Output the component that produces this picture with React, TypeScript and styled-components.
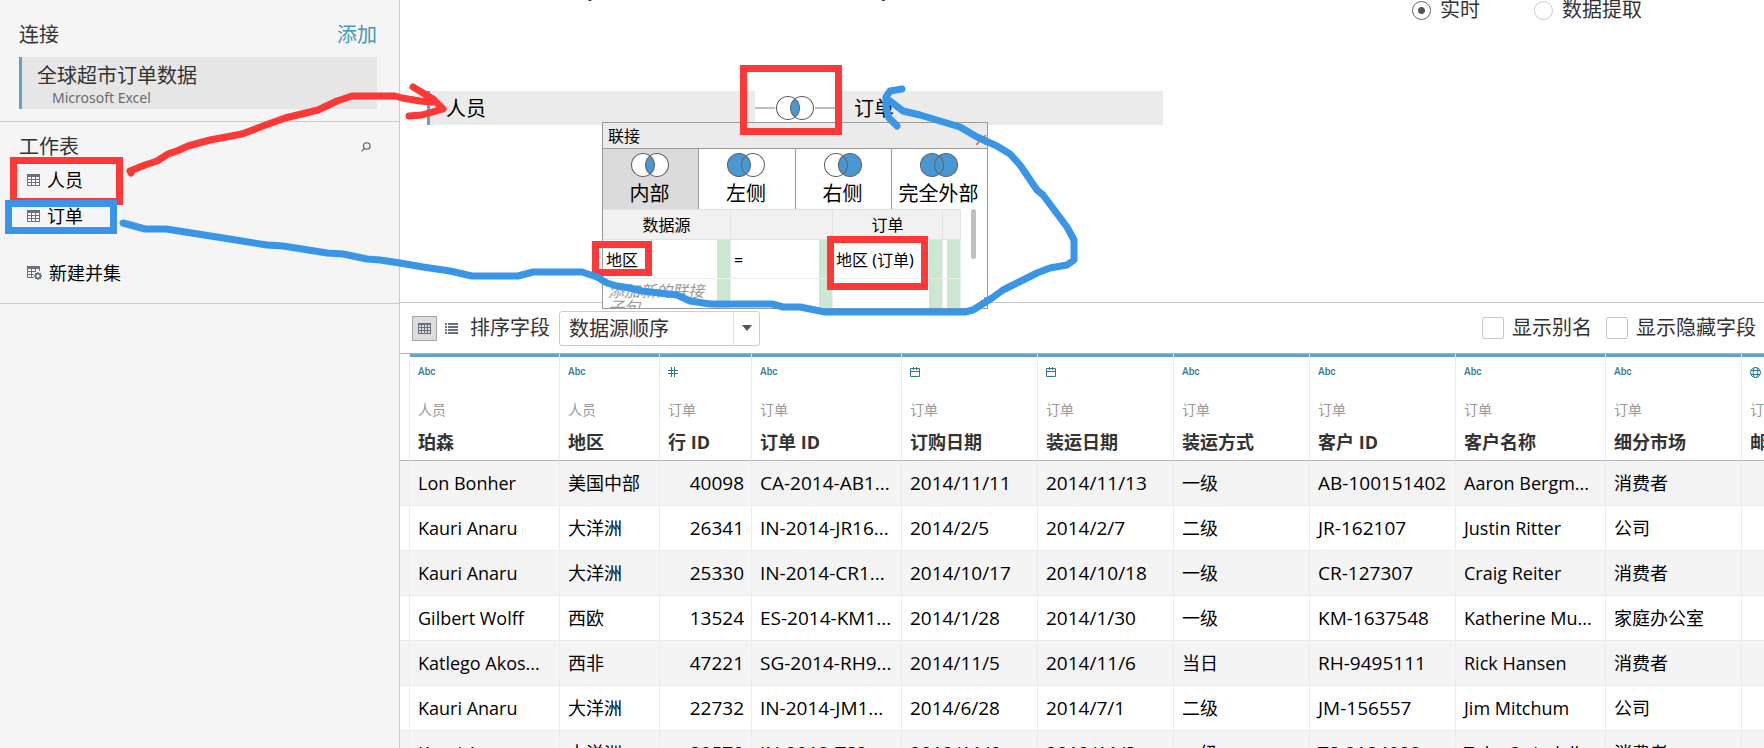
import React from "react";
import styled, { createGlobalStyle, css } from "styled-components";

const sans = `"Open Sans", "Noto Sans CJK SC", sans-serif`;
const plain = `"Noto Sans", "Noto Sans CJK SC", sans-serif`;
const red = "#fd3837";
const blue = "#3995e6";
const accent = "#62a2c4";
const teal = "#2f7896";

const GlobalStyle = createGlobalStyle`
  *, *::before, *::after { box-sizing: border-box; }
  body { margin: 0; background: #fff; color: #333; font-family: ${sans}; font-size: 20px; line-height: 28px; }
  button, select, input { font: inherit; color: inherit; margin: 0; }
  button { border: 0; background: none; padding: 0; cursor: pointer; }
  h1, h2 { margin: 0; font-weight: 400; font-size: 20px; }
`;

const Page = styled.div`
  position: relative;
  display: flex;
  height: 100vh;
  overflow: hidden;
`;

/* ---------- sidebar ---------- */

const Sidebar = styled.aside`
  flex: 0 0 400px;
  background: #f5f5f5;
  border-right: 1px solid #cbcbcb;
`;

const SideSection = styled.section<{ $top: number; $bottom: number }>`
  padding: ${(p) => p.$top}px 22px ${(p) => p.$bottom}px 19px;
  border-bottom: 1px solid #cbcbcb;
`;

const SideHeader = styled.header`
  display: flex;
  align-items: center;
  justify-content: space-between;
`;

const AddLink = styled.a`
  color: #4796b3;
  text-decoration: none;
`;

const Connection = styled.button`
  display: block;
  width: 100%;
  margin-top: 8px;
  padding: 5px 0 3px 15px;
  border-left: 3px solid ${accent};
  background: #e6e6e6;
  text-align: left;
  line-height: 28px;
`;

const ConnectionKind = styled.span`
  display: block;
  padding-left: 15px;
  color: #6b6b6b;
  font-family: ${plain};
  font-size: 14px;
  line-height: 16px;
`;

const IconButton = styled.button`
  display: flex;
  padding: 6px;
`;

const SheetList = styled.ul`
  list-style: none;
  margin: 1px 0 21px;
  padding: 0;
`;

const SheetButton = styled.button`
  display: flex;
  align-items: center;
  gap: 7px;
  width: 100%;
  height: 36px;
  padding-left: 8px;
  color: #000;
  font-size: 18px;
`;

/* ---------- canvas ---------- */

const Main = styled.main`
  position: relative;
  flex: 1;
  min-width: 0;
  display: flex;
  flex-direction: column;
`;

const Canvas = styled.section`
  min-height: 303px;
  border-bottom: 1px solid #cbcbcb;
`;

const CanvasHeader = styled.header`
  display: flex;
  justify-content: space-between;
  align-items: flex-start;
  height: 91px;
  padding: 0 122px 0 80px;
`;

/* The title is scrolled almost out of the pane: only its lowest edge shows. */
const SourceTitle = styled.h1`
  margin-top: -38px;
  font-size: 36px;
  line-height: 40px;
  white-space: nowrap;
`;

const ModeGroup = styled.fieldset`
  display: flex;
  gap: 54px;
  margin: -4px 0 0;
  padding: 0;
  border: 0;
`;

const ModeLabel = styled.label`
  display: flex;
  align-items: center;
  gap: 9px;
`;

const Radio = styled.input`
  appearance: none;
  width: 19px;
  height: 19px;
  border: 1px solid #ccc;
  border-radius: 50%;
  &:checked {
    border-color: #666;
    background: radial-gradient(circle, #555 0 3px, transparent 4px);
  }
`;

const JoinFlow = styled.div`
  display: flex;
  padding-left: 27px;
`;

const TablePill = styled.button`
  width: 328px;
  height: 34px;
  padding: 2px 0 0 16px;
  border-left: 3px solid ${accent};
  background: #ebebeb;
  color: #000;
  text-align: left;
`;

const JoinLink = styled.button`
  display: flex;
  align-items: center;
  width: 80px;
  height: 34px;
  &::before,
  &::after {
    content: "";
    flex: 1;
    height: 2px;
    background: #bfbfbf;
  }
`;

/* ---------- join dialog ---------- */

const Dialog = styled.div`
  position: absolute;
  left: 202px;
  top: 122px;
  width: 386px;
  height: 187px;
  overflow: hidden;
  border: 1px solid #999;
  background: #fff;
  color: #000;
  z-index: 1;
`;

const DialogBar = styled.header`
  display: flex;
  align-items: center;
  justify-content: space-between;
  height: 26px;
  padding: 0 0 0 5px;
  background: #ebebeb;
  border-bottom: 1px solid #999;
  font-size: 16px;
`;

const CloseButton = styled.button`
  display: flex;
  padding: 8px 1px 0;
`;

const JoinKinds = styled.div`
  display: grid;
  grid-template-columns: 95px 97px 96px 96px;
  height: 60px;
`;

const JoinKind = styled.button<{ $on?: boolean }>`
  display: flex;
  flex-direction: column;
  align-items: center;
  padding-top: 4px;
  padding-right: 2px;
  white-space: nowrap;
  background: ${(p) => (p.$on ? "#dbdbdb" : "#fff")};
  & + & {
    border-left: 1px solid #999;
  }
  span {
    line-height: 34px;
  }
`;

const ClauseArea = styled.div`
  display: flex;
  align-items: flex-start;
  gap: 10px;
`;

const Clauses = styled.table`
  width: 358px;
  table-layout: fixed;
  border-collapse: separate;
  border-spacing: 0;
  font-family: ${plain};
  font-size: 16px;
  line-height: 16px;
`;

const ClauseHead = styled.th`
  height: 31px;
  padding: 0;
  background: #f1f1f1;
  border: solid #e2e2e2;
  border-width: 1px 1px 1px 0;
  font-weight: 400;
`;

const ClauseCell = styled.td<{ $hint?: boolean }>`
  height: 39px;
  padding: 2px 14px 0 3px;
  border-bottom: 1px solid #ececec;
  border-right: 1px solid #ececec;
  background: linear-gradient(#cce7cf, #cce7cf) right / 13px 100% no-repeat;
  white-space: nowrap;
  ${(p) =>
    p.$hint &&
    css`
      padding-left: 5px;
      padding-top: 4px;
      vertical-align: top;
      white-space: normal;
      color: #999;
      font-style: italic;
    `}
`;

const ScrollThumb = styled.div`
  width: 5px;
  height: 50px;
  border-radius: 3px;
  background: #bfbfbf;
`;

const ResizeGrip = styled.svg`
  position: absolute;
  right: 0;
  bottom: 2px;
`;

/* ---------- toolbar ---------- */

const Toolbar = styled.div`
  display: flex;
  align-items: center;
  height: 51px;
  padding: 0 8px 0 12px;
  border-bottom: 1px solid #b4b4b4;
`;

const ViewButton = styled.button<{ $on?: boolean }>`
  display: grid;
  place-items: center;
  width: 25px;
  height: 25px;
  margin-right: 2px;
  border: 1px solid ${(p) => (p.$on ? "#a6a6a6" : "transparent")};
  background: ${(p) => (p.$on ? "#dcdcdc" : "none")};
`;

const SortLabel = styled.label`
  margin: 0 9px 0 4px;
`;

const SelectBox = styled.div`
  position: relative;
  display: flex;
  width: 201px;
  height: 35px;
  border: 1px solid #ccc;
  border-radius: 3px;
`;

const SortSelect = styled.select`
  appearance: none;
  flex: 1;
  padding: 1px 0 0 9px;
  border: 0;
  background: none;
`;

const SelectArrow = styled.span`
  position: absolute;
  inset: 0 0 0 auto;
  width: 26px;
  display: grid;
  place-items: center;
  border-left: 1px solid #e2e2e2;
  pointer-events: none;
`;

const CheckGroup = styled.div`
  display: flex;
  gap: 14px;
  margin-left: auto;
`;

const CheckLabel = styled.label`
  display: flex;
  align-items: center;
  gap: 8px;
`;

const Check = styled.input`
  appearance: none;
  width: 22px;
  height: 22px;
  border: 1px solid #c6c6c6;
  border-radius: 2px;
`;

/* ---------- data grid ---------- */

const GridScroll = styled.div`
  flex: 1;
  min-height: 0;
  overflow: hidden;
`;

const DataTable = styled.table`
  width: 1478px;
  table-layout: fixed;
  border-collapse: separate;
  border-spacing: 0;
`;

const Gutter = styled.td<{ $head?: boolean }>`
  padding: 0;
  border-right: 1px solid #ebebeb;
  border-bottom: 1px solid ${(p) => (p.$head ? "#b4b4b4" : "#ebebeb")};
`;

const HeadCell = styled.th`
  height: 107px;
  padding: 0 0 0 8px;
  background: linear-gradient(${accent}, ${accent}) left top / 100% 3px no-repeat;
  background-clip: padding-box;
  border-right: 1px solid #ebebeb;
  border-bottom: 1px solid #b4b4b4;
  text-align: left;
  vertical-align: top;
  white-space: nowrap;
`;

const TypeMark = styled.span`
  display: flex;
  align-items: center;
  height: 16px;
  margin-top: 10px;
  color: ${teal};
  font: 500 10px/16px Roboto, sans-serif;
`;

const Origin = styled.span`
  display: block;
  margin-top: 18px;
  color: #999;
  font-size: 14px;
  font-weight: 400;
  line-height: 24px;
`;

const FieldName = styled.span`
  display: block;
  margin-top: 6px;
  font-size: 18px;
  font-weight: 700;
  line-height: 28px;
`;

const BodyRow = styled.tr`
  &:nth-child(odd) {
    background: #f4f4f4;
  }
`;

const BodyCell = styled.td<{ $kind: Kind }>`
  height: 45px;
  padding: 0 7px 0 8px;
  border-right: 1px solid #ebebeb;
  border-bottom: 1px solid #ebebeb;
  color: #000;
  font-size: ${(p) => (p.$kind === "text" ? 18 : 19)}px;
  text-align: ${(p) => (p.$kind === "number" ? "right" : "left")};
  white-space: nowrap;
`;

const Markup = styled.svg`
  position: absolute;
  left: 0;
  top: 0;
  pointer-events: none;
  z-index: 2;
`;

/* ---------- icons ---------- */

type Fill = "inner" | "left" | "right" | "full";

function Venn({ fill }: { fill: Fill }) {
  const paint = "#4898d4";
  const l = fill === "left" || fill === "full" ? paint : "#fff";
  const r = fill === "right" || fill === "full" ? paint : "#fff";
  const lens = "M20 2.9a11.5 11.5 0 0 1 0 18.2a11.5 11.5 0 0 1 0-18.2z";
  return (
    <svg width="40" height="24" viewBox="0 0 40 24" aria-hidden="true">
      <circle cx="13" cy="12" r="11.5" fill={l} />
      <circle cx="27" cy="12" r="11.5" fill={r} />
      <path d={lens} fill={paint} />
      <g fill="none" stroke="#666" strokeWidth="1.1">
        <circle cx="13" cy="12" r="11.5" />
        <circle cx="27" cy="12" r="11.5" />
      </g>
    </svg>
  );
}

function SheetIcon() {
  return (
    <svg width="13" height="12" viewBox="0 0 13 12" aria-hidden="true">
      <path d="M0 0h13v12H0z" fill="#667080" />
      <path
        fill="#fff"
        d="M1 3h3v2H1zM5 3h3v2H5zM9 3h3v2H9zM1 6h3v2H1zM5 6h3v2H5zM9 6h3v2H9zM1 9h3v2H1zM5 9h3v2H5zM9 9h3v2H9z"
      />
    </svg>
  );
}

function UnionIcon() {
  return (
    <svg width="15" height="14" viewBox="0 0 15 14" aria-hidden="true">
      <path d="M0 0h13v5H9v3H8v4H0z" fill="#667080" />
      <path fill="#f5f5f5" d="M1 3h3v2H1zM5 3h3v2H5zM9 3h3v2H9zM1 6h3v2H1zM5 6h3v2H5zM1 9h3v2H1zM5 9h3v2H5z" />
      <circle cx="11" cy="10" r="4.6" fill="#f5f5f5" />
      <circle cx="11" cy="10" r="2.4" fill="none" stroke="#667080" strokeWidth="1.6" />
      <path
        d="M11 6v1.5M11 12.5V14M7 10h1.5M13.5 10H15M8.2 7.2l1 1M12.8 11.8l1 1M13.8 7.2l-1 1M9.2 11.8l-1 1"
        stroke="#667080"
        strokeWidth="1.4"
      />
    </svg>
  );
}

function SearchIcon() {
  return (
    <svg width="10" height="10" viewBox="0 0 10 10" fill="none" stroke="#555" strokeWidth="1.1" aria-hidden="true">
      <circle cx="5.8" cy="4" r="3.3" />
      <path d="M3.5 6.4L.5 9.3" />
    </svg>
  );
}

function GridIcon() {
  return (
    <svg width="13" height="11" viewBox="0 0 13 11" aria-hidden="true">
      <path d="M0 0h13v11H0z" fill="#667080" />
      <path
        fill="#dcdcdc"
        d="M1 2h2v2H1zM4 2h2v2H4zM7 2h2v2H7zM10 2h2v2h-2zM1 5h2v2H1zM4 5h2v2H4zM7 5h2v2H7zM10 5h2v2h-2zM1 8h2v2H1zM4 8h2v2H4zM7 8h2v2H7zM10 8h2v2h-2z"
      />
    </svg>
  );
}

function ListIcon() {
  return (
    <svg width="13" height="11" viewBox="0 0 13 11" fill="#667080" aria-hidden="true">
      <path d="M0 0h2v2H0zM3 0h10v2H3zM0 3h2v2H0zM3 3h10v2H3zM0 6h2v2H0zM3 6h10v2H3zM0 9h2v2H0zM3 9h10v2H3z" />
    </svg>
  );
}

function TypeIcon({ type }: { type: FieldType }) {
  if (type === "abc") return <>Abc</>;
  if (type === "number")
    return (
      <svg width="10" height="10" viewBox="0 0 10 10" stroke={teal} aria-hidden="true">
        <path d="M3.5 0v10M6.5 0v10M0 3.5h10M0 6.5h10" />
      </svg>
    );
  if (type === "date")
    return (
      <svg width="10" height="10" viewBox="0 0 10 10" fill="none" stroke={teal} aria-hidden="true">
        <path d="M.5 1.5h9v8h-9zM0 4.5h10M3.5 0v3M6.5 0v3" />
      </svg>
    );
  return (
    <svg width="11" height="11" viewBox="0 0 11 11" fill="none" stroke={teal} aria-hidden="true">
      <circle cx="5.5" cy="5.5" r="5" />
      <ellipse cx="5.5" cy="5.5" rx="2.3" ry="5" />
      <path d="M1 3.5h9M1 7.5h9" />
    </svg>
  );
}

/* ---------- data ---------- */

type FieldType = "abc" | "number" | "date" | "geo";
type Kind = "text" | "code" | "number";
type Field = { name: string; from: string; type: FieldType; kind: Kind; width: number };

const fields: Field[] = [
  { name: "珀森", from: "人员", type: "abc", kind: "text", width: 150 },
  { name: "地区", from: "人员", type: "abc", kind: "text", width: 100 },
  { name: "行 ID", from: "订单", type: "number", kind: "number", width: 92 },
  { name: "订单 ID", from: "订单", type: "abc", kind: "code", width: 150 },
  { name: "订购日期", from: "订单", type: "date", kind: "code", width: 136 },
  { name: "装运日期", from: "订单", type: "date", kind: "code", width: 136 },
  { name: "装运方式", from: "订单", type: "abc", kind: "text", width: 136 },
  { name: "客户 ID", from: "订单", type: "abc", kind: "code", width: 146 },
  { name: "客户名称", from: "订单", type: "abc", kind: "text", width: 150 },
  { name: "细分市场", from: "订单", type: "abc", kind: "text", width: 136 },
  { name: "邮政编码", from: "订单", type: "geo", kind: "number", width: 136 },
];

const rows: string[][] = [
  ["Lon Bonher", "美国中部", "40098", "CA-2014-AB1...", "2014/11/11", "2014/11/13", "一级", "AB-100151402", "Aaron Bergm...", "消费者", ""],
  ["Kauri Anaru", "大洋洲", "26341", "IN-2014-JR16...", "2014/2/5", "2014/2/7", "二级", "JR-162107", "Justin Ritter", "公司", ""],
  ["Kauri Anaru", "大洋洲", "25330", "IN-2014-CR1...", "2014/10/17", "2014/10/18", "一级", "CR-127307", "Craig Reiter", "消费者", ""],
  ["Gilbert Wolff", "西欧", "13524", "ES-2014-KM1...", "2014/1/28", "2014/1/30", "一级", "KM-1637548", "Katherine Mu...", "家庭办公室", ""],
  ["Katlego Akos...", "西非", "47221", "SG-2014-RH9...", "2014/11/5", "2014/11/6", "当日", "RH-9495111", "Rick Hansen", "消费者", ""],
  ["Kauri Anaru", "大洋洲", "22732", "IN-2014-JM1...", "2014/6/28", "2014/7/1", "二级", "JM-156557", "Jim Mitchum", "公司", ""],
  ["Kauri Anaru", "大洋洲", "30570", "IN-2012-TS2...", "2012/11/6", "2012/11/8", "一级", "TS-2134092", "Toby Swindell", "消费者", ""],
];

const joinKinds: { label: string; fill: Fill }[] = [
  { label: "内部", fill: "inner" },
  { label: "左侧", fill: "left" },
  { label: "右侧", fill: "right" },
  { label: "完全外部", fill: "full" },
];

function JoinDialog() {
  return (
    <Dialog role="dialog" aria-label="联接">
      <DialogBar>
        联接
        <CloseButton aria-label="关闭">
          <svg width="10" height="10" viewBox="0 0 10 10" stroke="#d4573c" strokeWidth="1.4" aria-hidden="true">
            <path d="M0 0l10 10M10 0L0 10" />
          </svg>
        </CloseButton>
      </DialogBar>
      <JoinKinds>
        {joinKinds.map((k) => (
          <JoinKind key={k.fill} $on={k.fill === "inner"}>
            <Venn fill={k.fill} />
            <span>{k.label}</span>
          </JoinKind>
        ))}
      </JoinKinds>
      <ClauseArea>
        <Clauses>
          <colgroup>
            <col width="128" />
            <col width="102" />
            <col width="110" />
            <col width="18" />
          </colgroup>
          <thead>
            <tr>
              <ClauseHead>数据源</ClauseHead>
              <ClauseHead />
              <ClauseHead>订单</ClauseHead>
              <ClauseHead />
            </tr>
          </thead>
          <tbody>
            <tr>
              <ClauseCell>地区</ClauseCell>
              <ClauseCell>=</ClauseCell>
              <ClauseCell>地区 (订单)</ClauseCell>
              <ClauseCell />
            </tr>
            <tr>
              <ClauseCell $hint>添加新的联接子句</ClauseCell>
              <ClauseCell />
              <ClauseCell />
              <ClauseCell />
            </tr>
          </tbody>
        </Clauses>
        <ScrollThumb />
      </ClauseArea>
      <ResizeGrip width="9" height="9" viewBox="0 0 9 9" fill="#a6a6a6" aria-hidden="true">
        <path d="M6 0h3v3H6zM3 3h3v3H3zM6 3h3v3H6zM0 6h3v3H0zM3 6h3v3H3zM6 6h3v3H6z" />
      </ResizeGrip>
    </Dialog>
  );
}

function HandMarkup() {
  return (
    <Markup width="1100" height="330" viewBox="0 0 1100 330" fill="none" strokeWidth="7" aria-hidden="true">
      <g stroke={red}>
        <rect x="13.5" y="160.5" width="106" height="41" />
        <rect x="743.5" y="68.5" width="95" height="63" />
        <rect x="595.5" y="244.5" width="53" height="28" />
        <rect x="830.5" y="239.5" width="94" height="47" />
      </g>
      <rect x="8.5" y="203.5" width="105" height="27" stroke={blue} />
      <g strokeLinecap="round" strokeLinejoin="round">
        <path
          stroke={red}
          d="M131 173L130 171L145 165L157 161L168 154L177 151L188 146L210 140L242 134L263 126L285 118L318 110L337 101L352 96L395 96L402 98L420 101L432 102M413 87L433 99L443 109L436 111L422 115L409 116"
        />
        <path
          stroke={blue}
          d="M123 223L145 229L166 229L217 237L267 245L283 246L327 253L343 254L367 259L380 260L400 263L423 267L450 271L472 276L518 276L533 272L582 272L597 277L607 283L617 286L630 288L642 291L677 295L690 301L710 304L772 304L783 307L800 307L825 312L965 312L973 310L992 298L1003 290L1037 273L1050 268L1067 265L1074 260L1074 240L1067 227L1043 195L1037 190L1020 165L1010 154L997 146L977 137L960 127L940 121L920 115L903 111L890 101M902 89L890 91L886 97L886 107L889 118L897 126"
        />
      </g>
    </Markup>
  );
}

export default function App() {
  return (
    <Page>
      <GlobalStyle />
      <Sidebar>
        <SideSection $top={21} $bottom={12}>
          <SideHeader>
            <h2>连接</h2>
            <AddLink href="#add">添加</AddLink>
          </SideHeader>
          <Connection>
            全球超市订单数据
            <ConnectionKind>Microsoft Excel</ConnectionKind>
          </Connection>
        </SideSection>
        <SideSection $top={11} $bottom={12}>
          <SideHeader>
            <h2>工作表</h2>
            <IconButton aria-label="搜索">
              <SearchIcon />
            </IconButton>
          </SideHeader>
          <SheetList>
            <li>
              <SheetButton>
                <SheetIcon />
                人员
              </SheetButton>
            </li>
            <li>
              <SheetButton>
                <SheetIcon />
                订单
              </SheetButton>
            </li>
          </SheetList>
          <SheetButton>
            <UnionIcon />
            新建并集
          </SheetButton>
        </SideSection>
      </Sidebar>
      <Main>
        <Canvas>
          <CanvasHeader>
            <SourceTitle>人员+ (全球超市订单数据)</SourceTitle>
            <ModeGroup aria-label="连接">
              <ModeLabel>
                <Radio type="radio" name="mode" defaultChecked />
                实时
              </ModeLabel>
              <ModeLabel>
                <Radio type="radio" name="mode" />
                数据提取
              </ModeLabel>
            </ModeGroup>
          </CanvasHeader>
          <JoinFlow>
            <TablePill>人员</TablePill>
            <JoinLink aria-label="联接">
              <Venn fill="inner" />
            </JoinLink>
            <TablePill>订单</TablePill>
          </JoinFlow>
        </Canvas>
        <JoinDialog />
        <Toolbar>
          <ViewButton $on aria-label="网格">
            <GridIcon />
          </ViewButton>
          <ViewButton aria-label="列表">
            <ListIcon />
          </ViewButton>
          <SortLabel htmlFor="sort">排序字段</SortLabel>
          <SelectBox>
            <SortSelect id="sort" defaultValue="source">
              <option value="source">数据源顺序</option>
            </SortSelect>
            <SelectArrow>
              <svg width="10" height="6" viewBox="0 0 10 6" fill="#555" aria-hidden="true">
                <path d="M0 0h10L5 6z" />
              </svg>
            </SelectArrow>
          </SelectBox>
          <CheckGroup>
            <CheckLabel>
              <Check type="checkbox" />
              显示别名
            </CheckLabel>
            <CheckLabel>
              <Check type="checkbox" />
              显示隐藏字段
            </CheckLabel>
          </CheckGroup>
        </Toolbar>
        <GridScroll>
          <DataTable>
            <colgroup>
              <col width="10" />
              {fields.map((f) => (
                <col key={f.name} width={f.width} />
              ))}
            </colgroup>
            <thead>
              <tr>
                <Gutter $head />
                {fields.map((f) => (
                  <HeadCell key={f.name} scope="col">
                    <TypeMark>
                      <TypeIcon type={f.type} />
                    </TypeMark>
                    <Origin>{f.from}</Origin>
                    <FieldName>{f.name}</FieldName>
                  </HeadCell>
                ))}
              </tr>
            </thead>
            <tbody>
              {rows.map((row, i) => (
                <BodyRow key={i}>
                  <Gutter />
                  {row.map((value, j) => (
                    <BodyCell key={j} $kind={fields[j].kind}>
                      {value}
                    </BodyCell>
                  ))}
                </BodyRow>
              ))}
            </tbody>
          </DataTable>
        </GridScroll>
      </Main>
      <HandMarkup />
    </Page>
  );
}
